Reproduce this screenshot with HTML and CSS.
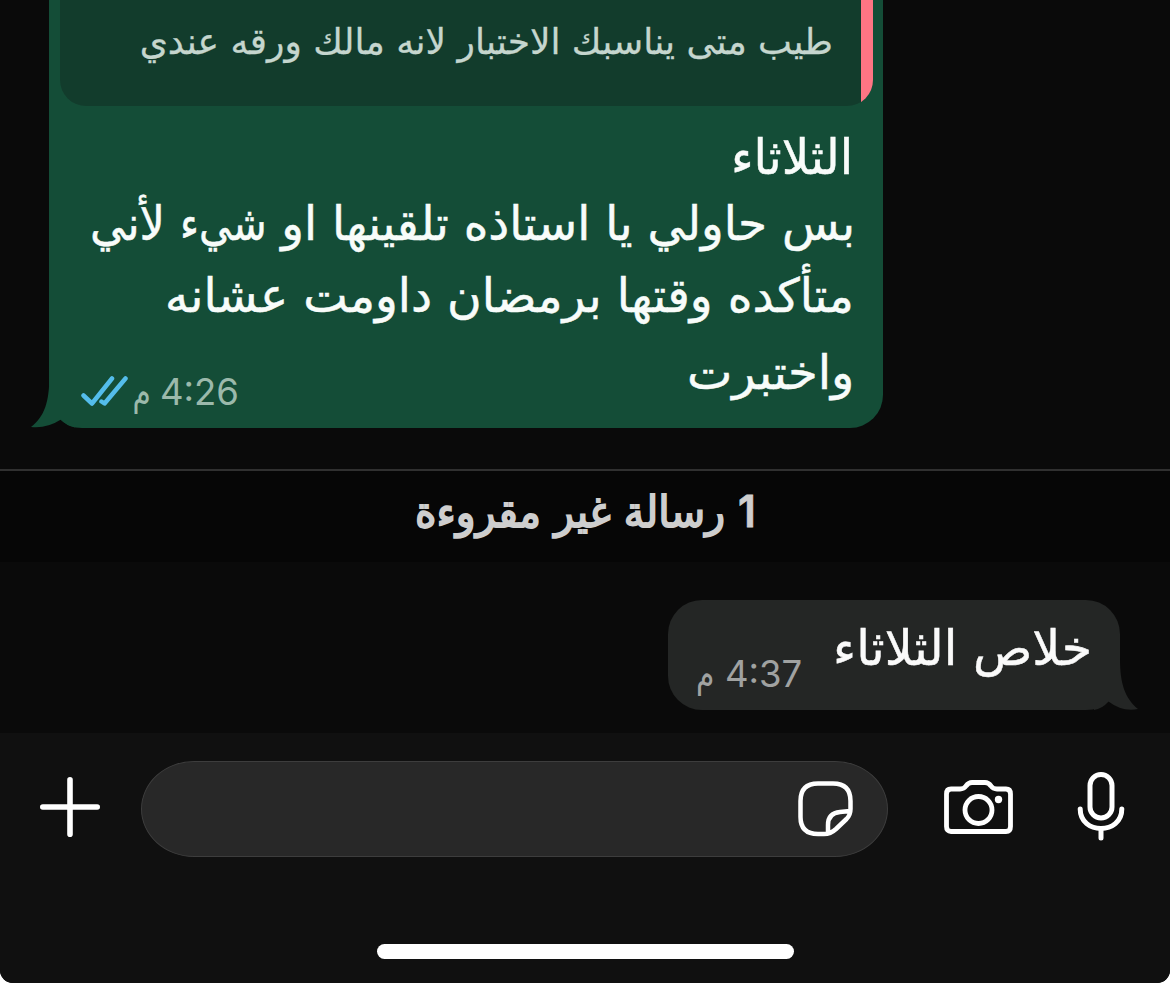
FILE: index.html
```html
<!DOCTYPE html>
<html lang="ar" dir="rtl">
<head>
<meta charset="utf-8">
<title>محادثة</title>
<link rel="stylesheet" href="styles.css">
</head>
<body>
<div class="screen">
  <main class="chat">
    <div class="bubble bubble-out">
      <div class="quote"><span class="quote-text">طيب متى يناسبك الاختبار لانه مالك ورقه عندي</span></div>
      <div class="message">
        <div class="line line-1"><span>الثلاثاء</span></div>
        <div class="line line-2">بس حاولي يا استاذه تلقينها او <span class="tight">شيء</span> <span class="snug">لأني</span></div>
        <div class="line line-3"><span>متأكده وقتها برمضان داومت عشانه</span></div>
        <div class="line line-4"><span>واختبرت</span></div>
      </div>
      <div class="meta meta-out">
        <span class="clock">4:26</span><span class="period">م</span>
        <svg class="ticks" width="48" height="34" viewBox="0 0 48 34"><path d="M3.500 20.500 L12 28.500 L32 3.500 M21.500 26.500 L24.500 28.500 L45.500 3.500"/></svg>
      </div>
      <svg class="tail tail-out" width="44" height="60" viewBox="0 0 44 60"><path d="M18.500 0 V8 C18 34 14 48 0 59 Q15 61 30 51.500 Q36 59 48 60 V0 Z"/></svg>
    </div>
  </main>
  <div class="unread"><span class="unread-text"><b class="count">1</b> رسالة غير مقروءة</span></div>
  <section class="incoming">
    <div class="bubble bubble-in">
      <span class="in-text">خلاص الثلاثاء</span>
      <div class="meta meta-in"><span class="clock">4:37</span><span class="period">م</span></div>
      <svg class="tail tail-in" width="44" height="60" viewBox="0 0 44 60"><path d="M26 0 V8 C26 34 31 48 44 59 Q28 62 14.500 51.500 Q8 59 0 60 V0 Z"/></svg>
    </div>
  </section>
  <footer class="composer">
    <div class="bar">
      <svg class="icon plus" width="60" height="60" viewBox="0 0 60 60"><path d="M30 2.800 V57.200 M2.800 30 H57.200"/></svg>
      <div class="field">
        <svg class="icon sticker" width="58" height="58" viewBox="0 0 58 58"><path d="M21 3.500 H36 Q53.500 3.500 53.500 21 V29 Q53.500 35 49.500 39 L39 49 Q33.500 54 27 54 H21 Q3.500 54 3.500 37 V21 Q3.500 3.500 21 3.500 Z M53 31 L43 32 Q31 33 31 45 V53"/></svg>
      </div>
      <svg class="icon camera" width="70" height="56" viewBox="0 0 70 56"><path d="M7 9 H16 Q20 9 22 6 Q24.500 2.500 28 2.500 H41 Q44.500 2.500 47 6 Q49 9 53 9 H62 Q66.500 9 66.500 14 V46.500 Q66.500 51.500 62 51.500 H7 Q2.500 51.500 2.500 46.500 V14 Q2.500 9 7 9 Z"/><circle cx="34.500" cy="30" r="13.500"/><circle class="dot" cx="54.500" cy="19.500" r="3.700"/></svg>
      <svg class="icon mic" width="50" height="70" viewBox="0 0 50 70"><rect x="14" y="2.500" width="22" height="43.500" rx="11"/><path d="M4.200 37 C4.200 63 45.800 63 45.800 37 M25 57 V66"/></svg>
    </div>
    <div class="home"></div>
  </footer>
</div>
</body>
</html>
```
FILE: styles.css
```css
* { box-sizing: border-box; }
html, body { margin: 0; background: #fff; }
body { font-family: "DejaVu Sans", sans-serif; }
svg { display: block; flex: none; fill: none; }

.screen {
  width: 1170px;
  height: 983px;
  overflow: hidden;
  display: flex;
  flex-direction: column;
  background: #0a0a0a;
  border-radius: 0 0 13px 13px;
}
.chat { height: 469px; flex: none; direction: ltr; }
.bubble { position: relative; direction: rtl; }
.bubble-out {
  width: 834px;
  height: 428px;
  margin-left: 49px;
  padding: 0 10px 0 11px;
  background: #144d37;
  border-radius: 0 0 33px 33px;
}
.quote {
  height: 106px;
  border-radius: 0 0 26px 26px;
  overflow: hidden;
  background: linear-gradient(to left, #ff7584 12px, #123c2c 12px);
  padding-right: 40px;
  color: #c5d6ce;
  font-size: 36px;
  line-height: 84px;
  white-space: nowrap;
  -webkit-text-stroke: 0.3px;
}
.quote-text, .line span, .unread-text, .in-text, .period {
  display: inline-block;
  transform-origin: right center;
}
.message {
  padding: 18px 19px 0 0;
  color: #f8fcfa;
  font-size: 47px;
  white-space: nowrap;
  -webkit-text-stroke: 0.5px;
}
.line-1, .line-2 { line-height: 67px; height: 66px; }
.line-2 { margin-right: -1px; }
.line-3 { line-height: 80px; height: 78px; }
.line-4 { line-height: 77px; height: 74px; }
.line-1 span { transform: translateX(-1px) scale(1.026, 1.03); }
.line-2 .tight { transform: scaleX(0.86); margin-left: -14px; }
.line-2 .snug { transform: scaleX(0.95); }
.line-3 span { transform: scaleX(1.006); }
.line-4 span { transform: scaleX(1.025); }

.meta { position: absolute; display: flex; align-items: center; font-size: 37px; line-height: 44px; }
.clock { font-family: Inter, sans-serif; font-size: 36.500px; direction: ltr; }
.meta-out { right: 644px; bottom: 14px; color: #9bb9ab; }
.meta-in { left: 28px; bottom: 14px; color: #a0a2a1; }
.period { margin-right: 12px; font-size: 37px; transform: translateY(1px) scaleX(0.8); }
.meta-out .period { margin-right: 9px; }
.meta-in .period { transform-origin: left center; margin-right: 6px; }
.ticks { stroke: #54bdeb; stroke-width: 4.500; stroke-linecap: round; stroke-linejoin: round; }
.tail { position: absolute; bottom: 0; }
.tail-out { left: -18px; fill: #144d37; }
.tail-in { right: -18px; fill: #242625; }

.unread {
  height: 93px;
  flex: none;
  border-top: 2px solid #303030;
  background: #060606;
  color: #cecece;
  font-size: 43px;
  line-height: 80px;
  text-align: center;
}
.unread-text { transform-origin: center; transform: scaleX(0.955); -webkit-text-stroke: 1.8px; }
.count { font-family: Inter, sans-serif; font-size: 44px; font-weight: 600; -webkit-text-stroke: 0.8px; }

.incoming { height: 171px; flex: none; padding: 38px 50px 0 0; }
.bubble-in {
  width: 452px;
  height: 110px;
  border-radius: 34px;
  background: #242625;
  padding-right: 28px;
  color: #fafafa;
  line-height: 98px;
  white-space: nowrap;
}
.in-text { font-size: 47px; transform: scale(1.044, 1.03); -webkit-text-stroke: 0.5px; }

.composer { height: 250px; flex: none; background: #101010; direction: ltr; }
.bar { height: 152px; display: flex; align-items: center; padding-left: 40px; }
.icon { stroke: #fff; stroke-width: 5; stroke-linecap: round; stroke-linejoin: round; }
.plus { stroke-width: 5.600; margin-top: -4px; }
.field {
  width: 747px;
  height: 96px;
  margin-left: 41px;
  border: 1px solid #3d3d3d;
  border-radius: 53px / 48px;
  background: #282828;
  display: flex;
  align-items: center;
  justify-content: flex-end;
  padding-right: 32px;
}
.sticker { stroke-width: 4.500; margin-top: -1px; }
.camera { margin-left: 55.500px; margin-top: -2px; stroke-width: 4.800; }
.camera .dot { fill: #fff; stroke: none; }
.mic { margin-left: 62.500px; margin-top: -5px; }
.home { width: 417px; height: 15px; margin: 59px auto 0 377px; border-radius: 8px; background: #fff; }
```
